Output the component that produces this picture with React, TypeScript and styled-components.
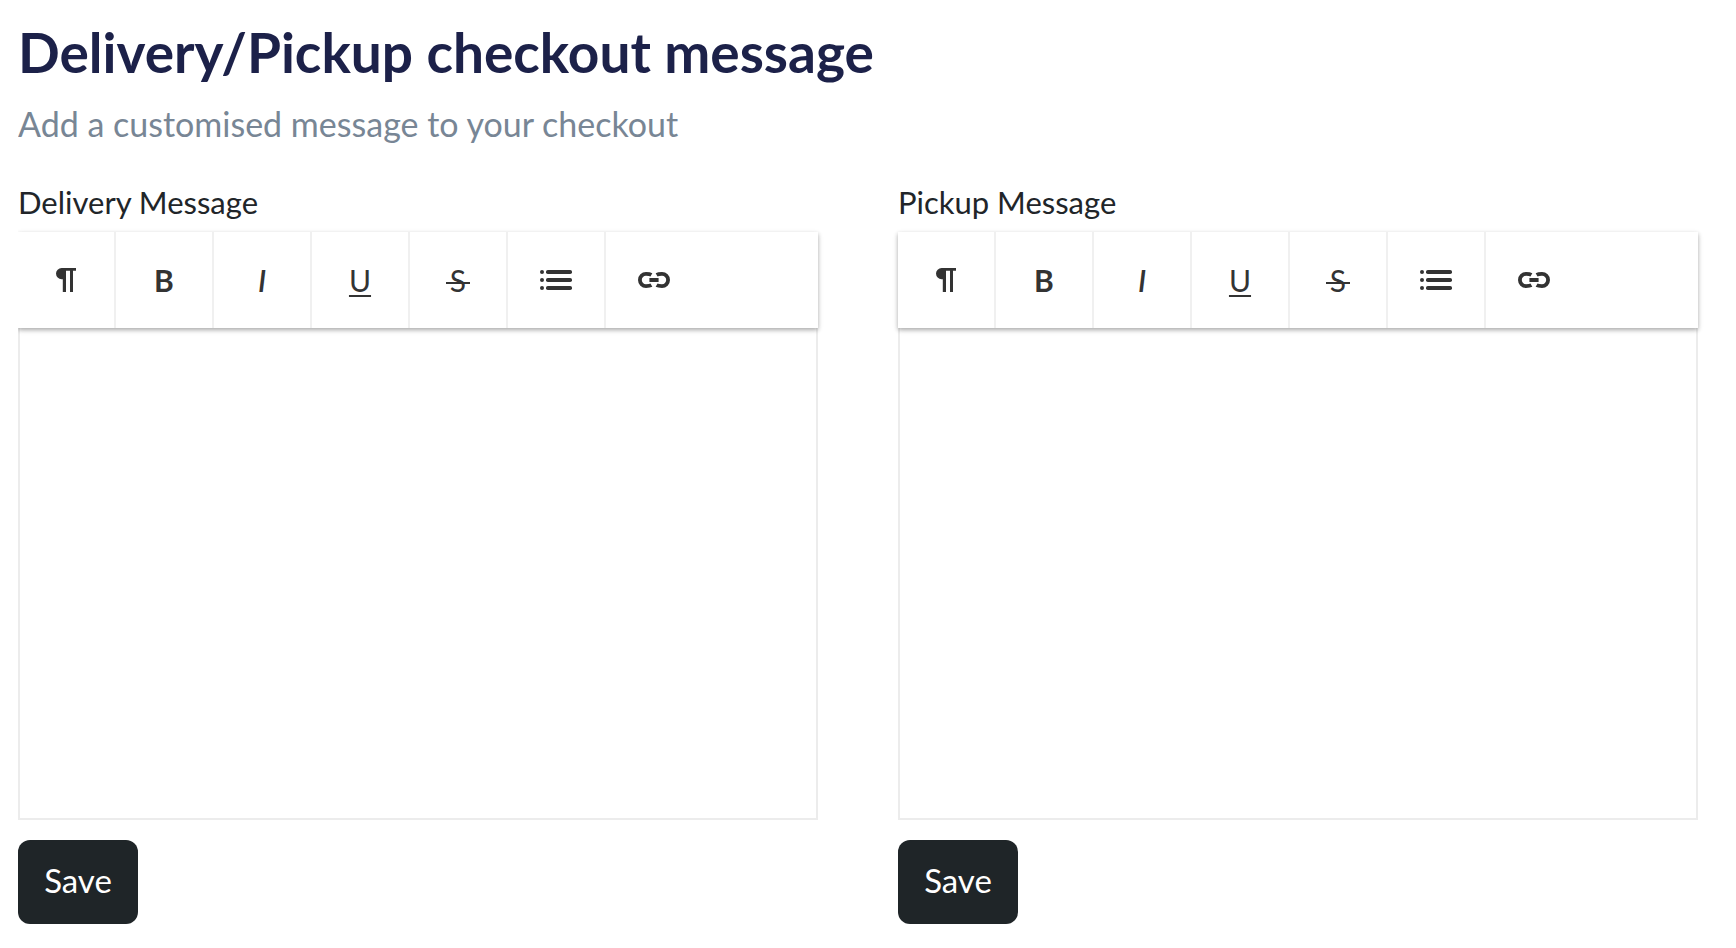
import React from "react";
import styled, { createGlobalStyle, css } from "styled-components";

const GlobalStyle = createGlobalStyle`
  *, *::before, *::after { box-sizing: border-box; }
  body {
    margin: 0;
    background: #fff;
    color: #212529;
    font-family: Lato, "Open Sans", sans-serif;
  }
`;

const Page = styled.main`
  margin-left: 18px;
  padding: 19px 38px 24px 0;
  overflow: hidden;
`;

const Title = styled.h1`
  margin: 0;
  color: #1c2149;
  font-size: 55px;
  font-weight: 700;
  line-height: 66px;
`;

const Subtitle = styled.p`
  margin: 18px 0 39px;
  color: #788695;
  font-size: 34px;
  line-height: 42px;
`;

const Columns = styled.div`
  display: grid;
  grid-template-columns: 1fr 1fr;
  gap: 80px;
`;

const Field = styled.form`
  display: flex;
  flex-direction: column;
  align-items: flex-start;
`;

const FieldLabel = styled.label`
  margin-bottom: 12px;
  font-size: 31px;
  line-height: 36px;
`;

const Toolbar = styled.div`
  position: relative;
  z-index: 1;
  display: flex;
  align-self: stretch;
  background: #fff;
  box-shadow: 0 2px 6px rgba(0, 0, 0, 0.12), 0 2px 4px rgba(0, 0, 0, 0.24);
`;

const ToolButton = styled.button`
  display: flex;
  align-items: center;
  justify-content: center;
  width: 98px;
  height: 96px;
  padding: 0;
  border: 0;
  border-right: 2px solid #f0f0f0;
  background: transparent;
  color: #333;
  font-family: inherit;
  font-size: 30px;
  line-height: 36px;
  cursor: pointer;

  &:last-child {
    border-right-color: transparent;
  }
`;

type Mark = "bold" | "italic" | "underline" | "strike";

const marks = {
  bold: css`
    font-weight: 700;
  `,
  italic: css`
    font-style: italic;
    font-weight: 600;
  `,
  underline: css`
    text-decoration: underline 2px;
    text-decoration-skip-ink: none;
    text-underline-offset: 3px;
  `,
  strike: css`
    padding: 0 4px;
    background: linear-gradient(#333, #333) center 20px / 100% 2px no-repeat;
  `,
};

const Letter = styled.span<{ $mark: Mark }>`
  ${({ $mark }) => marks[$mark]}
`;

const Editor = styled.textarea`
  display: block;
  align-self: stretch;
  height: 492px;
  margin: 0 0 20px;
  padding: 20px;
  border: 2px solid #ececec;
  border-top: 0;
  border-radius: 0;
  outline: 0;
  resize: none;
  background: #fff;
  color: inherit;
  font-family: inherit;
  font-size: 31px;
  line-height: 36px;
`;

const SaveButton = styled.button`
  min-width: 120px;
  height: 84px;
  padding: 0 26px 4px;
  border: 0;
  border-radius: 12px;
  background: #1f2528;
  color: #fff;
  font-family: inherit;
  font-size: 33px;
  line-height: 42px;
  cursor: pointer;
`;

const PilcrowIcon = () => (
  <svg width="20" height="24" viewBox="0 0 20 24" fill="currentColor" aria-hidden="true">
    <path d="M5.6 0H20v2.7h-3V24h-3V2.7h-4V24H6.8V11.2H5.6A5.6 5.6 0 0 1 5.6 0Z" />
  </svg>
);

const ListIcon = () => (
  <svg width="32" height="20" viewBox="0 0 32 20" fill="currentColor" aria-hidden="true">
    {[2, 10, 18].map((y) => (
      <g key={y}>
        <circle cx="2" cy={y} r="2" />
        <rect x="6" y={y - 2} width="26" height="4" rx="1.8" />
      </g>
    ))}
  </svg>
);

const LinkIcon = () => (
  <svg width="32" height="16" viewBox="0 0 32 16" fill="none" stroke="currentColor" aria-hidden="true">
    <path
      d="M13.4 2.8C12 2 10.2 1.9 8 1.9a6.1 6.1 0 0 0 0 12.2c2.2 0 4-.1 5.4-.9M18.6 2.8c1.4-.8 3.2-.9 5.4-.9a6.1 6.1 0 0 1 0 12.2c-2.2 0-4-.1-5.4-.9"
      strokeWidth="3.8"
    />
    <path d="M11.4 8h9.2" strokeWidth="4" />
  </svg>
);

const tools = [
  { name: "Paragraph", face: <PilcrowIcon /> },
  { name: "Bold", face: <Letter $mark="bold">B</Letter> },
  { name: "Italic", face: <Letter $mark="italic">I</Letter> },
  { name: "Underline", face: <Letter $mark="underline">U</Letter> },
  { name: "Strikethrough", face: <Letter $mark="strike">S</Letter> },
  { name: "Bulleted list", face: <ListIcon /> },
  { name: "Link", face: <LinkIcon /> },
];

function MessageField({ id, label }: { id: string; label: string }) {
  return (
    <Field onSubmit={(event) => event.preventDefault()}>
      <FieldLabel htmlFor={id}>{label}</FieldLabel>
      <Toolbar role="toolbar" aria-label={`${label} formatting`}>
        {tools.map(({ name, face }) => (
          <ToolButton key={name} type="button" aria-label={name}>
            {face}
          </ToolButton>
        ))}
      </Toolbar>
      <Editor id={id} />
      <SaveButton type="submit">Save</SaveButton>
    </Field>
  );
}

export default function App() {
  return (
    <>
      <GlobalStyle />
      <Page>
        <Title>Delivery/Pickup checkout message</Title>
        <Subtitle>Add a customised message to your checkout</Subtitle>
        <Columns>
          <MessageField id="delivery-message" label="Delivery Message" />
          <MessageField id="pickup-message" label="Pickup Message" />
        </Columns>
      </Page>
    </>
  );
}
